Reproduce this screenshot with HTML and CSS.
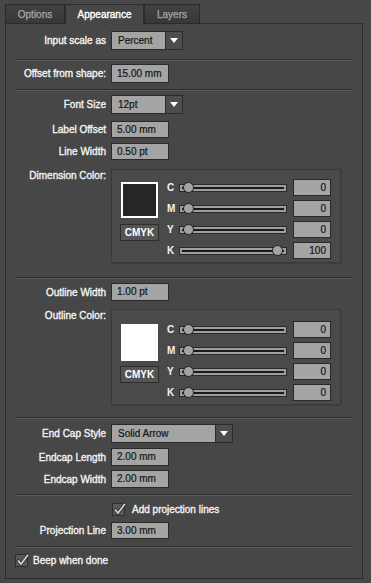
FILE: index.html
```html
<!DOCTYPE html>
<html>
<head>
<meta charset="utf-8">
<link rel="stylesheet" href="styles.css">
</head>
<body>
<div class="tabs">
  <div class="tab tab-options">Options</div>
  <div class="tab tab-appearance active">Appearance</div>
  <div class="tab tab-layers">Layers</div>
</div>
<div class="panel">
  <section class="sec sec-scale">
    <div class="row">
      <span class="lbl">Input scale as</span>
      <div class="select sel-short"><span class="sel-val">Percent</span><span class="sel-arrow"></span></div>
    </div>
  </section>
  <div class="sep"></div>
  <section class="sec sec-offset">
    <div class="row">
      <span class="lbl">Offset from shape:</span>
      <div class="field f19">15.00 mm</div>
    </div>
  </section>
  <div class="sep"></div>
  <section class="sec sec-font">
    <div class="row">
      <span class="lbl">Font Size</span>
      <div class="select sel-short"><span class="sel-val">12pt</span><span class="sel-arrow"></span></div>
    </div>
    <div class="row mt7">
      <span class="lbl">Label Offset</span>
      <div class="field f17">5.00 mm</div>
    </div>
    <div class="row mt5">
      <span class="lbl">Line Width</span>
      <div class="field f17">0.50 pt</div>
    </div>
    <div class="row row-top mt9">
      <span class="lbl lbl-top">Dimension Color:</span>
      <div class="cpanel">
        <div class="cp-left">
          <div class="swatch sw-dark"></div>
          <div class="cmyk-btn">CMYK</div>
        </div>
        <div class="cp-sliders">
          <div class="srow"><span class="ch">C</span><div class="track"><span class="thumb" style="--v:0"></span></div><div class="num">0</div></div>
          <div class="srow"><span class="ch">M</span><div class="track"><span class="thumb" style="--v:0"></span></div><div class="num">0</div></div>
          <div class="srow"><span class="ch">Y</span><div class="track"><span class="thumb" style="--v:0"></span></div><div class="num">0</div></div>
          <div class="srow"><span class="ch">K</span><div class="track"><span class="thumb" style="--v:100"></span></div><div class="num">100</div></div>
        </div>
      </div>
    </div>
  </section>
  <div class="sep"></div>
  <section class="sec sec-outline">
    <div class="row">
      <span class="lbl">Outline Width</span>
      <div class="field f18">1.00 pt</div>
    </div>
    <div class="row row-top mt8">
      <span class="lbl lbl-top">Outline Color:</span>
      <div class="cpanel cpanel-tall">
        <div class="cp-left">
          <div class="swatch sw-white"></div>
          <div class="cmyk-btn">CMYK</div>
        </div>
        <div class="cp-sliders">
          <div class="srow"><span class="ch">C</span><div class="track"><span class="thumb" style="--v:0"></span></div><div class="num">0</div></div>
          <div class="srow"><span class="ch">M</span><div class="track"><span class="thumb" style="--v:0"></span></div><div class="num">0</div></div>
          <div class="srow"><span class="ch">Y</span><div class="track"><span class="thumb" style="--v:0"></span></div><div class="num">0</div></div>
          <div class="srow"><span class="ch">K</span><div class="track"><span class="thumb" style="--v:0"></span></div><div class="num">0</div></div>
        </div>
      </div>
    </div>
  </section>
  <div class="sep"></div>
  <section class="sec sec-endcap">
    <div class="row">
      <span class="lbl">End Cap Style</span>
      <div class="select sel-long"><span class="sel-val">Solid Arrow</span><span class="sel-arrow"></span></div>
    </div>
    <div class="row mt5">
      <span class="lbl">Endcap Length</span>
      <div class="field f18">2.00 mm</div>
    </div>
    <div class="row mt4">
      <span class="lbl">Endcap Width</span>
      <div class="field f18">2.00 mm</div>
    </div>
  </section>
  <div class="sep"></div>
  <section class="sec sec-proj">
    <div class="row">
      <span class="lbl"></span>
      <label class="check check-wide"><span class="box"><svg width="15" height="15" viewBox="0 0 15 15"><polyline points="3.5,8 6,11 12.5,2.5" fill="none" stroke="#2a2a2a" stroke-width="3.4" stroke-linecap="square"/><polyline points="3.5,8 6,11 12.5,2.5" fill="none" stroke="#d0d0d0" stroke-width="1.8" stroke-linecap="square"/></svg></span><span class="check-txt">Add projection lines</span></label>
    </div>
    <div class="row mt6">
      <span class="lbl">Projection Line</span>
      <div class="field f17">3.00 mm</div>
    </div>
  </section>
  <div class="sep"></div>
  <section class="sec sec-beep">
    <label class="check"><span class="box"><svg width="15" height="15" viewBox="0 0 15 15"><polyline points="3.5,8 6,11 12.5,2.5" fill="none" stroke="#2a2a2a" stroke-width="3.4" stroke-linecap="square"/><polyline points="3.5,8 6,11 12.5,2.5" fill="none" stroke="#d0d0d0" stroke-width="1.8" stroke-linecap="square"/></svg></span><span class="check-txt">Beep when done</span></label>
  </section>
</div>
</body>
</html>
```

FILE: styles.css
```css
html, body {
  margin: 0;
  padding: 0;
  background: #474747;
  width: 371px;
  height: 583px;
  overflow: hidden;
}
body {
  font-family: "Liberation Sans", Arial, sans-serif;
  font-size: 10px;
  color: #f2f2f2;
}

/* Tabs */
.tabs {
  display: flex;
  padding: 4px 0 0 5px;
  height: 19px;
  position: relative;
  z-index: 2;
}
.tab {
  box-sizing: border-box;
  height: 19px;
  border: 1px solid #2b2b2b;
  border-bottom: none;
  background: linear-gradient(#414141, #383838);
  color: #a9a9a9;
  text-align: center;
  line-height: 18px;
  padding-top: 1px;
  -webkit-text-stroke: 0.25px #a9a9a9;
}
.tab-options { width: 60px; }
.tab-appearance { width: 79px; }
.tab-layers { width: 56px; }
.tab.active {
  background: #474747;
  color: #ffffff;
  height: 20px;
  -webkit-text-stroke: 0.35px #ffffff;
}

/* Panel */
.panel {
  box-sizing: border-box;
  margin: 0 8px 0 5px;
  height: 556px;
  border: 1px solid #2b2b2b;
  background: #474747;
}
.sep {
  margin: 0 9px;
  height: 0;
  border-top: 1px solid #303030;
  border-bottom: 1px solid #5a5a5a;
}
.sec { padding: 0 9px; }
.sec-scale { padding-top: 7px; padding-bottom: 9px; }
.sec-offset { padding-top: 3px; padding-bottom: 6px; }
.sec-font { padding-top: 4px; padding-bottom: 14px; }
.sec-outline { padding-top: 4px; padding-bottom: 12px; }
.sec-endcap { padding-top: 5px; padding-bottom: 6px; }
.sec-proj { padding-top: 7px; padding-bottom: 7px; }
.sec-beep { padding-top: 6px; }

.row {
  display: grid;
  grid-template-columns: 91px auto;
  column-gap: 5px;
  align-items: center;
  justify-items: start;
}
.row-top { align-items: start; }
.mt4 { margin-top: 4px; }
.mt5 { margin-top: 5px; }
.mt6 { margin-top: 6px; }
.mt7 { margin-top: 7px; }
.mt8 { margin-top: 8px; }
.mt9 { margin-top: 9px; }

.lbl {
  justify-self: end;
  white-space: nowrap;
  color: #f4f4f4;
  -webkit-text-stroke: 0.35px #f4f4f4;
}
.lbl-top { padding-top: 1px; }

/* Inputs */
.field {
  box-sizing: border-box;
  width: 58px;
  border: 1px solid #2a2a2a;
  background: #a4a4a4;
  color: #141414;
  padding-left: 5px;
  white-space: nowrap;
  -webkit-text-stroke: 0.2px #141414;
}
.f17 { height: 17px; line-height: 15px; }
.f18 { height: 18px; line-height: 16px; }
.f19 { height: 19px; line-height: 17px; }

.select {
  display: flex;
  height: 19px;
  box-sizing: border-box;
}
.sel-short { width: 72px; }
.sel-long { width: 122px; }
.sel-val {
  flex: 1;
  box-sizing: border-box;
  border: 1px solid #2a2a2a;
  background: #a4a4a4;
  color: #141414;
  padding-left: 6px;
  line-height: 17px;
  -webkit-text-stroke: 0.2px #141414;
}
.sel-arrow {
  width: 17px;
  box-sizing: border-box;
  border: 1px solid #2a2a2a;
  border-left: none;
  background: #4d4d4d;
  display: flex;
  align-items: center;
  justify-content: center;
}
.sel-arrow::before {
  content: "";
  width: 0;
  height: 0;
  border-left: 4px solid transparent;
  border-right: 4px solid transparent;
  border-top: 5px solid #ffffff;
}

/* Colour panel */
.cpanel {
  box-sizing: border-box;
  width: 230px;
  height: 94px;
  border: 1px solid #3a3a3a;
  box-shadow: 1px 1px 0 #3f3f3f;
  background: #4a4a4a;
  display: flex;
  padding: 9px 0 0 8px;
}
.cpanel-tall { height: 96px; padding-top: 11px; }
.cp-left {
  width: 39px;
  margin-top: 3px;
  display: flex;
  flex-direction: column;
  align-items: center;
}
.swatch {
  box-sizing: border-box;
  width: 37px;
  height: 36px;
  border: 2px solid #ffffff;
}
.sw-dark { background: #262626; }
.sw-white { background: #ffffff; height: 37px; }
.cmyk-btn {
  box-sizing: border-box;
  margin-top: 6px;
  width: 39px;
  height: 17px;
  border: 1px solid #2d2d2d;
  background: #555555;
  color: #ffffff;
  font-weight: bold;
  text-align: center;
  line-height: 15px;
}
.sw-white + .cmyk-btn { margin-top: 5px; }
.cp-sliders {
  margin-left: 8px;
  display: flex;
  flex-direction: column;
  gap: 4px;
}
.srow {
  display: flex;
  align-items: center;
  height: 17px;
}
.ch {
  width: 12px;
  font-weight: bold;
  color: #f2f2f2;
}
.track {
  position: relative;
  box-sizing: border-box;
  width: 108px;
  height: 8px;
  border: 1px solid #2a2a2a;
  background: #9e9e9e;
}
.track::before {
  content: "";
  position: absolute;
  left: 2px;
  right: 2px;
  top: 2px;
  height: 2px;
  background: #1a1a1a;
}
.thumb {
  position: absolute;
  top: -3px;
  left: calc(3px + var(--v) * 0.89px);
  box-sizing: border-box;
  width: 11px;
  height: 11px;
  border-radius: 50%;
  border: 1px solid #1f1f1f;
  background: #a3a3a3;
}
.num {
  box-sizing: border-box;
  margin-left: 6px;
  width: 38px;
  height: 17px;
  border: 1px solid #2a2a2a;
  background: #a4a4a4;
  color: #141414;
  text-align: right;
  padding-right: 4px;
  line-height: 15px;
  -webkit-text-stroke: 0.2px #141414;
}

/* Checkboxes */
.check {
  display: flex;
  align-items: center;
  height: 13px;
}
.check-wide { margin-left: 1px; }
.box {
  position: relative;
  box-sizing: border-box;
  width: 13px;
  height: 13px;
  border: 1px solid #2e2e2e;
  background: #595959;
}
.box svg {
  position: absolute;
  left: -1px;
  top: -2px;
}
.check-txt {
  margin-left: 5px;
  color: #f4f4f4;
  -webkit-text-stroke: 0.35px #f4f4f4;
}
.check-wide .check-txt { margin-left: 7px; }
```
